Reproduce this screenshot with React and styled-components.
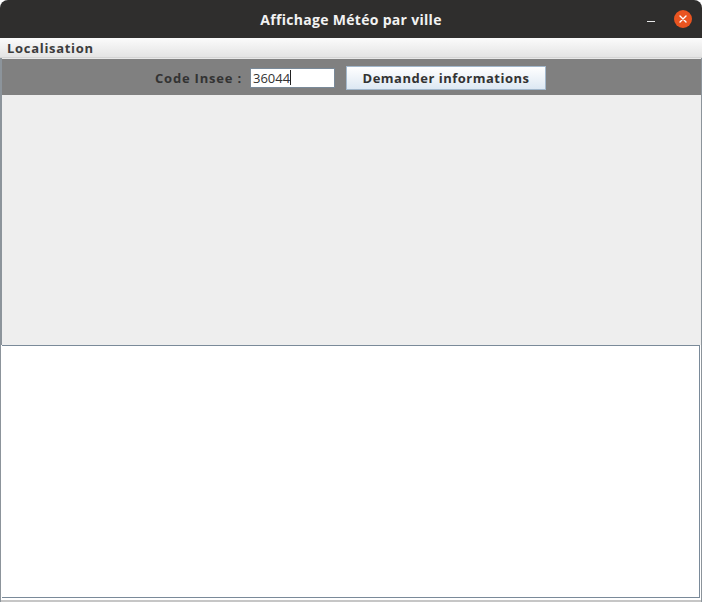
import React from "react";
import styled, { createGlobalStyle } from "styled-components";

const Global = createGlobalStyle`
  html, body {
    margin: 0;
    padding: 0;
    background: #ffffff;
    font-family: "Open Sans", "DejaVu Sans", sans-serif;
  }
`;

const Window = styled.div`
  width: 702px;
  height: 602px;
  display: flex;
  flex-direction: column;
  overflow: hidden;
`;

const TitleBar = styled.div`
  height: 38px;
  flex-shrink: 0;
  background: #2f2e2d;
  border-radius: 8px 8px 0 0;
  display: flex;
  align-items: center;
  justify-content: center;
  position: relative;
  color: #f2f2f2;
  font-weight: 700;
  font-size: 14px;
  letter-spacing: 0.3px;
`;

const Controls = styled.div`
  position: absolute;
  right: 10px;
  top: 0;
  height: 38px;
  display: flex;
  align-items: center;
  gap: 19px;
`;

const Minimize = styled.span`
  width: 8px;
  height: 1px;
  background: #e8e8e8;
  margin-top: 4px;
`;

const CloseButton = styled.span`
  width: 18px;
  height: 18px;
  border-radius: 50%;
  background: #e95420;
  display: flex;
  align-items: center;
  justify-content: center;
`;

const MenuBar = styled.div`
  height: 19px;
  flex-shrink: 0;
  background: linear-gradient(#fbfbfb, #e4e4e4);
  border-bottom: 1px solid #d4d4d4;
  display: flex;
  align-items: center;
  padding-left: 7px;
  font-size: 13px;
  font-weight: 700;
  letter-spacing: 0.7px;
  color: #3c3c3c;
`;

const Body = styled.div`
  flex: 1;
  display: flex;
  flex-direction: column;
  border-left: 2px solid #8c949b;
  border-right: 1px solid #8c949b;
  background: #eeeeee;
`;

const Toolbar = styled.div`
  height: 37px;
  flex-shrink: 0;
  background: #808080;
  display: flex;
  align-items: center;
  justify-content: center;
  padding-top: 1px;
  box-sizing: border-box;
  border-top: 1px solid #e8e8e8;
`;

const Label = styled.span`
  font-size: 13px;
  font-weight: 700;
  letter-spacing: 0.8px;
  color: #333333;
  margin-right: 8px;
  margin-left: -2px;
`;

const CodeInput = styled.div`
  width: 81px;
  height: 18px;
  background: #ffffff;
  border: 1px solid #7a8a99;
  box-shadow: inset 0 0 0 1px #ffffff;
  font-size: 13px;
  color: #333333;
  display: flex;
  align-items: center;
  padding-left: 2px;
  box-sizing: content-box;
`;

const Caret = styled.span`
  width: 1px;
  height: 15px;
  background: #222;
`;

const Button = styled.div`
  margin-left: 11px;
  width: 198px;
  height: 22px;
  border: 1px solid #a3b8cc;
  background: linear-gradient(#ffffff, #dde8f3);
  display: flex;
  align-items: center;
  justify-content: center;
  font-size: 13px;
  font-weight: 700;
  letter-spacing: 0.5px;
  color: #333333;
`;

const InfoPanel = styled.div`
  height: 250px;
  flex-shrink: 0;
  background: #eeeeee;
`;

const TextArea = styled.div`
  flex: 1;
  margin: 0 1px 4px 0;
  background: #ffffff;
  border: 1px solid #7a8a99;
  border-left: none;
  box-shadow: 0 1px 0 1px #ffffff, 0 3px 0 1px #c6c6c6;
`;

export default function App() {
  return (
    <>
      <Global />
      <Window>
        <TitleBar>
          Affichage Météo par ville
          <Controls>
            <Minimize />
            <CloseButton>
              <svg width="10" height="10" viewBox="0 0 10 10">
                <path d="M2 2 L8 8 M8 2 L2 8" stroke="#fff" strokeWidth="1.4" strokeLinecap="round" />
              </svg>
            </CloseButton>
          </Controls>
        </TitleBar>
        <MenuBar>Localisation</MenuBar>
        <Body>
          <Toolbar>
            <Label>Code Insee :</Label>
            <CodeInput>
              36044
              <Caret />
            </CodeInput>
            <Button>Demander informations</Button>
          </Toolbar>
          <InfoPanel />
          <TextArea />
        </Body>
      </Window>
    </>
  );
}
